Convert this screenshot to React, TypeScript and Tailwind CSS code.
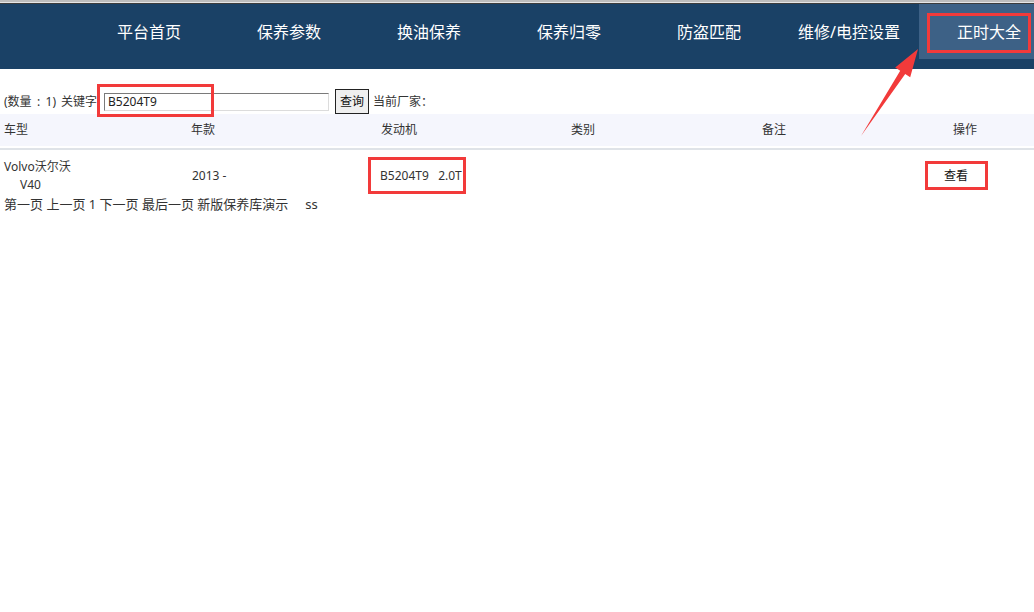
import React from "react";

const navItems = ["平台首页", "保养参数", "换油保养", "保养归零", "防盗匹配", "维修/电控设置"];

export default function App() {
  const font = { fontFamily: '"Noto Sans", "Noto Sans CJK SC", sans-serif' };
  return (
    <div className="relative w-[1034px] h-[612px] bg-white overflow-hidden" style={font}>
      {/* top frame strip */}
      <div className="h-[2px] bg-[#bdbdbd]" />
      <div className="h-[1px] bg-[#e6e6e6]" />
      <div className="h-[1px] bg-[#3c3c3c]" />
      {/* nav */}
      <div className="h-[65px] bg-[#1a4166] flex pl-[79px] items-start">
        {navItems.map((t) => (
          <div key={t} className="w-[140px] h-[55px] flex items-center justify-center text-white text-[16px] shrink-0">
            {t}
          </div>
        ))}
        <div className="w-[115px] h-[55px] bg-[#3d6186] flex items-center pl-[38px] text-white text-[16px] shrink-0">
          正时大全
        </div>
      </div>

      {/* search row */}
      <div className="mt-[20px] h-[25px] flex items-center text-[12px] text-[#333] pl-[4px]">
        <span className="w-[100px] shrink-0 flex items-center whitespace-pre">
          <span>(数量</span>
          <span className="inline-block w-[14px] text-center">:</span>
          <span>1)</span>
          <span className="pl-[5px]">关键字</span>
        </span>
        <div className="w-[225px] h-[18px] border border-t-[#7a7a7a] border-l-[#7a7a7a] border-r-[#dcdcdc] border-b-[#dcdcdc] bg-white flex items-center pl-[3px] text-[12px] text-[#222]">
          B5204T9
        </div>
        <div className="ml-[6px] w-[34px] h-[25px] border border-[#222] bg-[#efefef] flex items-center justify-center text-[12px] text-[#111]">
          查询
        </div>
        <span className="ml-[4px]">当前厂家：</span>
      </div>

      {/* table header */}
      <div className="h-[32px] bg-[#f5f6fd] flex items-center text-[12px] text-[#333]">
        <div className="w-[187px] pl-[4px]">车型</div>
        <div className="w-[190px] pl-[4px]">年款</div>
        <div className="w-[190px] pl-[4px]">发动机</div>
        <div className="w-[191px] pl-[4px]">类别</div>
        <div className="w-[172px] pl-[4px]">备注</div>
        <div className="flex-1 pl-[23px]">操作</div>
      </div>
      <div className="mt-[2px] h-[2px] bg-[#dfe3e8]" />

      {/* data row */}
      <div className="pt-[8px] pb-[3px] flex items-center text-[12px] text-[#333] leading-[18px]">
        <div className="w-[187px] pl-[4px]">
          <div>Volvo沃尔沃</div>
          <div className="pl-[16px]">V40</div>
        </div>
        <div className="w-[190px] pl-[5px]">2013 -</div>
        <div className="w-[190px] pl-[3px] whitespace-pre">B5204T9   2.0T</div>
        <div className="w-[191px]" />
        <div className="w-[172px]" />
        <div className="flex-1 pl-[14px] text-[#111]">查看</div>
      </div>

      {/* pagination */}
      <div className="h-[16px] flex items-center pl-[4px] text-[13px] text-[#333] whitespace-pre">
        第一页 上一页 1 下一页 最后一页 新版保养库演示     ss
      </div>

      {/* red annotations */}
      <div className="absolute left-[927px] top-[13px] w-[104px] h-[40px] border-[3px] border-[#f23a3a]" />
      <div className="absolute left-[97px] top-[84px] w-[117px] h-[33px] border-[3px] border-[#f23a3a]" />
      <div className="absolute left-[368px] top-[157px] w-[98px] h-[37px] border-[3px] border-[#f23a3a]" />
      <div className="absolute left-[925px] top-[161px] w-[63px] h-[29px] border-[3px] border-[#f23a3a]" />
      <svg className="absolute left-0 top-0" width="1034" height="612" viewBox="0 0 1034 612">
        <polygon
          points="861,136 905.2,74 910.2,77.3 918,49 895.2,67.5 900.2,70.8"
          fill="#f23a3a"
        />
      </svg>
    </div>
  );
}
